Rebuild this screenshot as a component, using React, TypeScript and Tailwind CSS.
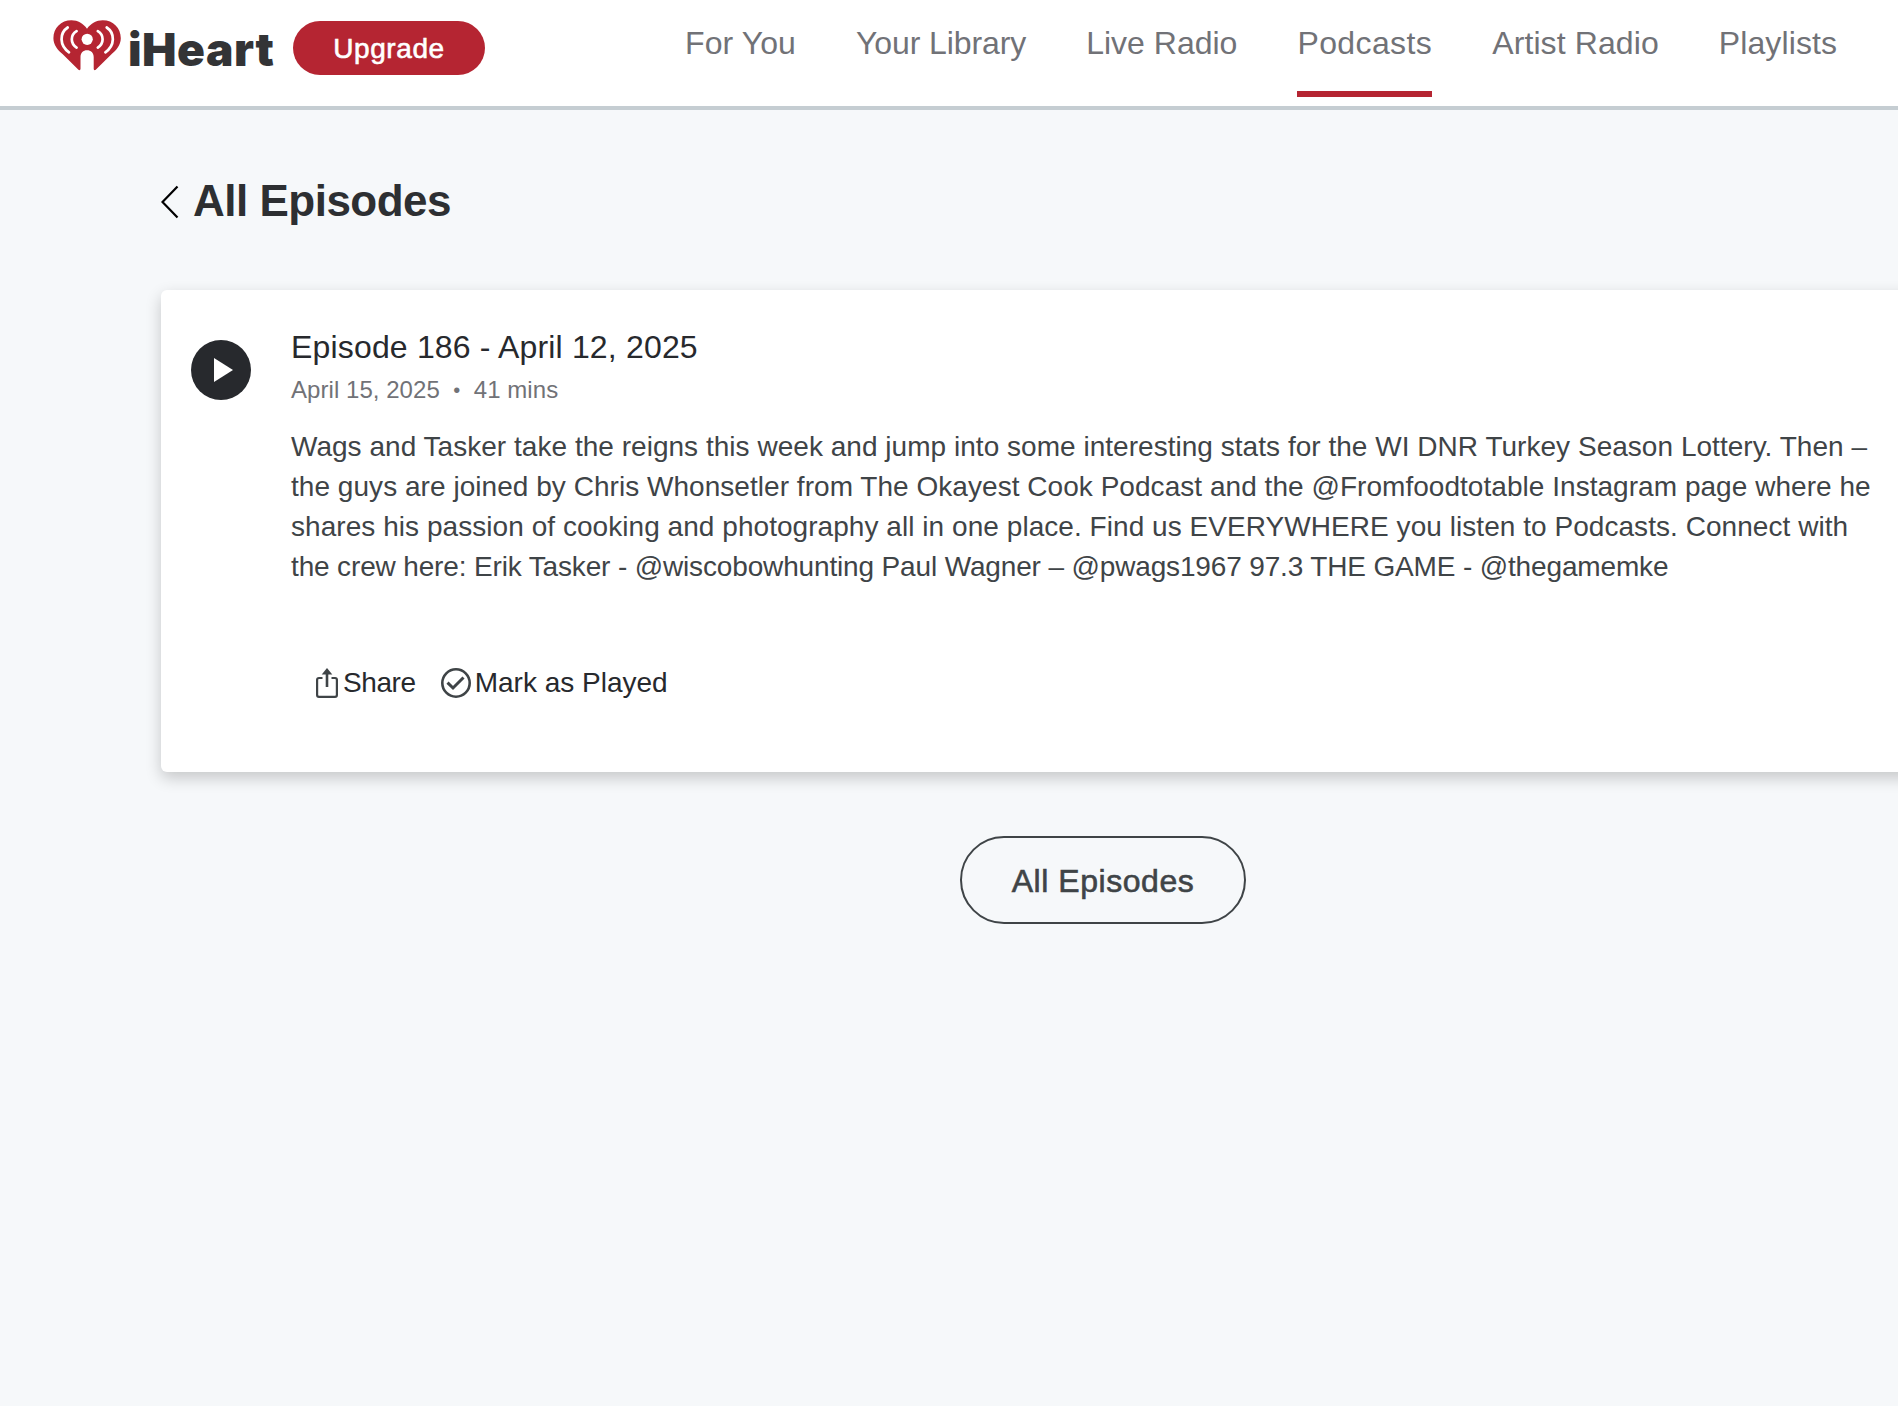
import clsx from "clsx";

const NAV_ITEMS = [
  { label: "For You", active: false, tracking: "tracking-[0.1px]" },
  { label: "Your Library", active: false, tracking: "tracking-[-0.1px]" },
  { label: "Live Radio", active: false, tracking: "tracking-[0px]" },
  { label: "Podcasts", active: true, tracking: "tracking-[0.4px]" },
  { label: "Artist Radio", active: false, tracking: "tracking-[0.1px]" },
  { label: "Playlists", active: false, tracking: "tracking-[0.1px]" },
];

const episode = {
  title: "Episode 186 - April 12, 2025",
  date: "April 15, 2025",
  duration: "41 mins",
  description: [
    {
      text: "Wags and Tasker take the reigns this week and jump into some interesting stats for the WI DNR Turkey Season Lottery. Then –",
      tracking: "tracking-[0.03px]",
    },
    {
      text: "the guys are joined by Chris Whonsetler from The Okayest Cook Podcast and the @Fromfoodtotable Instagram page where he",
      tracking: "tracking-[0.04px]",
    },
    {
      text: "shares his passion of cooking and photography all in one place. Find us EVERYWHERE you listen to Podcasts. Connect with",
      tracking: "tracking-[0.05px]",
    },
    {
      text: "the crew here: Erik Tasker - @wiscobowhunting Paul Wagner – @pwags1967 97.3 THE GAME - @thegamemke",
      tracking: "tracking-[-0.15px]",
    },
  ],
};

const HeartLogo = () => (
  <svg width="68" height="51" viewBox="0 0 68 51" fill="none">
    <path
      d="M34 8.8C30.2 3.500 24.8 .300 18.500 .300C8 .300 .4 8 .4 18.200C.4 25.200 5 30 9.500 34L25.200 49.600C26.200 50.600 27.500 50.300 27.500 48.800V37C27.500 32.800 30.200 30.300 34 30.300C37.800 30.300 40.700 32.800 40.700 37V48.800C40.700 50.300 42 50.600 43 49.600L58.700 34C63.200 30 67.800 25.200 67.800 18.200C67.800 8 60.200 .300 49.700 .300C43.400 .300 37.800 3.500 34 8.800Z"
      fill="#b52532"
    />
    <circle cx="34.200" cy="19.300" r="5.600" fill="#fff" />
    <g stroke="#fff" strokeWidth="2.700" strokeLinecap="round">
      <path d="M23.600 11.200C17.200 15 17.200 23.500 23.600 27.600" />
      <path d="M14.700 7.500C6.300 13 6.300 25.500 16 32.300" />
      <path d="M44.800 11.200C51.200 15 51.200 23.500 44.800 27.600" />
      <path d="M53.700 7.500C62.100 13 62.100 25.500 52.400 32.300" />
    </g>
  </svg>
);

const ShareIcon = () => (
  <svg width="22" height="30" viewBox="0 0 22 30" fill="none" stroke="#3f4447" strokeWidth="2.200">
    <path d="M6.500 10H3C1.800 10 1.100 10.700 1.100 11.800V27C1.100 28.200 1.800 28.900 3 28.900H19C20.200 28.900 20.900 28.200 20.900 27V11.800C20.900 10.700 20.200 10 19 10H15.500" />
    <path d="M11 19V3" strokeWidth="2.600" />
    <path d="M11 0L16.300 6.500H5.700Z" fill="#3f4447" stroke="none" />
  </svg>
);

const CheckCircleIcon = () => (
  <svg width="30" height="30" viewBox="0 0 30 30" fill="none" stroke="#3f4447">
    <circle cx="15" cy="15" r="13.700" strokeWidth="2.600" />
    <path d="M6.500 14.600L12 20L22.500 9.500" strokeWidth="3" />
  </svg>
);

const Header = () => (
  <header className="flex h-[110px] items-start border-b-4 border-[#c5cdd2] bg-white">
    <a className="mt-5 ml-[53px] flex w-60 shrink-0 items-start">
      <HeartLogo />
      <span className="mt-[3px] ml-[7px] font-[Inter] text-[46px] leading-[52px] font-black tracking-[0.5px] text-[#333436]">
        iHeart
      </span>
    </a>
    <button className="mt-[21px] h-[54px] w-48 shrink-0 rounded-full bg-[#b52532] pt-0.5 text-[28px] leading-[52px] tracking-[0.6px] text-white [-webkit-text-stroke:0.6px]">
      Upgrade
    </button>
    <nav className="ml-[200px] flex shrink-0 gap-[60px]">
      {NAV_ITEMS.map((item) => (
        <a
          key={item.label}
          className={clsx(
            "h-[97px] border-b-6 pt-[23px] text-[32px] leading-10 whitespace-nowrap text-[#717277]",
            item.tracking,
            item.active ? "border-[#b52532]" : "border-transparent",
          )}
        >
          {item.label}
        </a>
      ))}
    </nav>
  </header>
);

const EpisodeCard = () => (
  <section className="mt-[62px] flex h-[482px] rounded-md bg-white pl-[30px] shadow-[0_6px_16px_rgba(0,0,0,0.2)]">
    <button className="mt-[50px] flex size-[60px] shrink-0 items-center justify-center rounded-full bg-[#27292d]">
      <svg width="19" height="24" viewBox="0 0 19 24" className="ml-1">
        <path d="M0 0L19 12L0 24Z" fill="#fff" />
      </svg>
    </button>
    <div className="ml-10 w-[1592px]">
      <h2 className="mt-[37px] text-[32px] leading-10 tracking-[0.17px] text-[#27292d]">
        {episode.title}
      </h2>
      <p className="mt-[7px] flex text-[24px] leading-8 tracking-[0.05px] text-[#717277]">
        <span>{episode.date}</span>
        <span className="w-[34px] text-center text-[20px]">•</span>
        <span>{episode.duration}</span>
      </p>
      <p className="mt-[21px] text-[28px] leading-10 text-[#3f4447]">
        {episode.description.map((line) => (
          <span key={line.text} className={clsx("block whitespace-nowrap", line.tracking)}>
            {line.text}
          </span>
        ))}
      </p>
      <div className="mt-[76px] ml-[25px] flex items-center text-[28px] leading-10 text-[#27292d]">
        <button className="flex items-center gap-[5px] tracking-[-0.4px]">
          <ShareIcon />
          Share
        </button>
        <button className="ml-[25px] flex items-center gap-1">
          <CheckCircleIcon />
          Mark as Played
        </button>
      </div>
    </div>
  </section>
);

export default function App() {
  return (
    <div className="h-[1406px] w-full overflow-hidden bg-[#f6f8fa] font-['Liberation_Sans',Arial,sans-serif]">
      <Header />
      <main className="ml-[161px] w-[1884px] pt-[63px]">
        <div className="-mb-px flex h-14 items-center">
          <svg width="18" height="34" viewBox="0 0 18 34" fill="none" className="mt-0.5">
            <path d="M16.500 1.500L1.500 17L16.500 32.500" stroke="#000" strokeWidth="2.200" />
          </svg>
          <h1 className="ml-3.5 text-[44px] leading-14 font-bold tracking-[-0.5px] text-[#2d2f32]">
            All Episodes
          </h1>
        </div>
        <EpisodeCard />
        <div className="mt-16 flex justify-center">
          <button className="h-[88px] w-[286px] rounded-full border-2 border-[#3f4447] pt-0.5 text-[32px] tracking-[0.55px] text-[#3f4447] [-webkit-text-stroke:0.6px]">
            All Episodes
          </button>
        </div>
      </main>
    </div>
  );
}
